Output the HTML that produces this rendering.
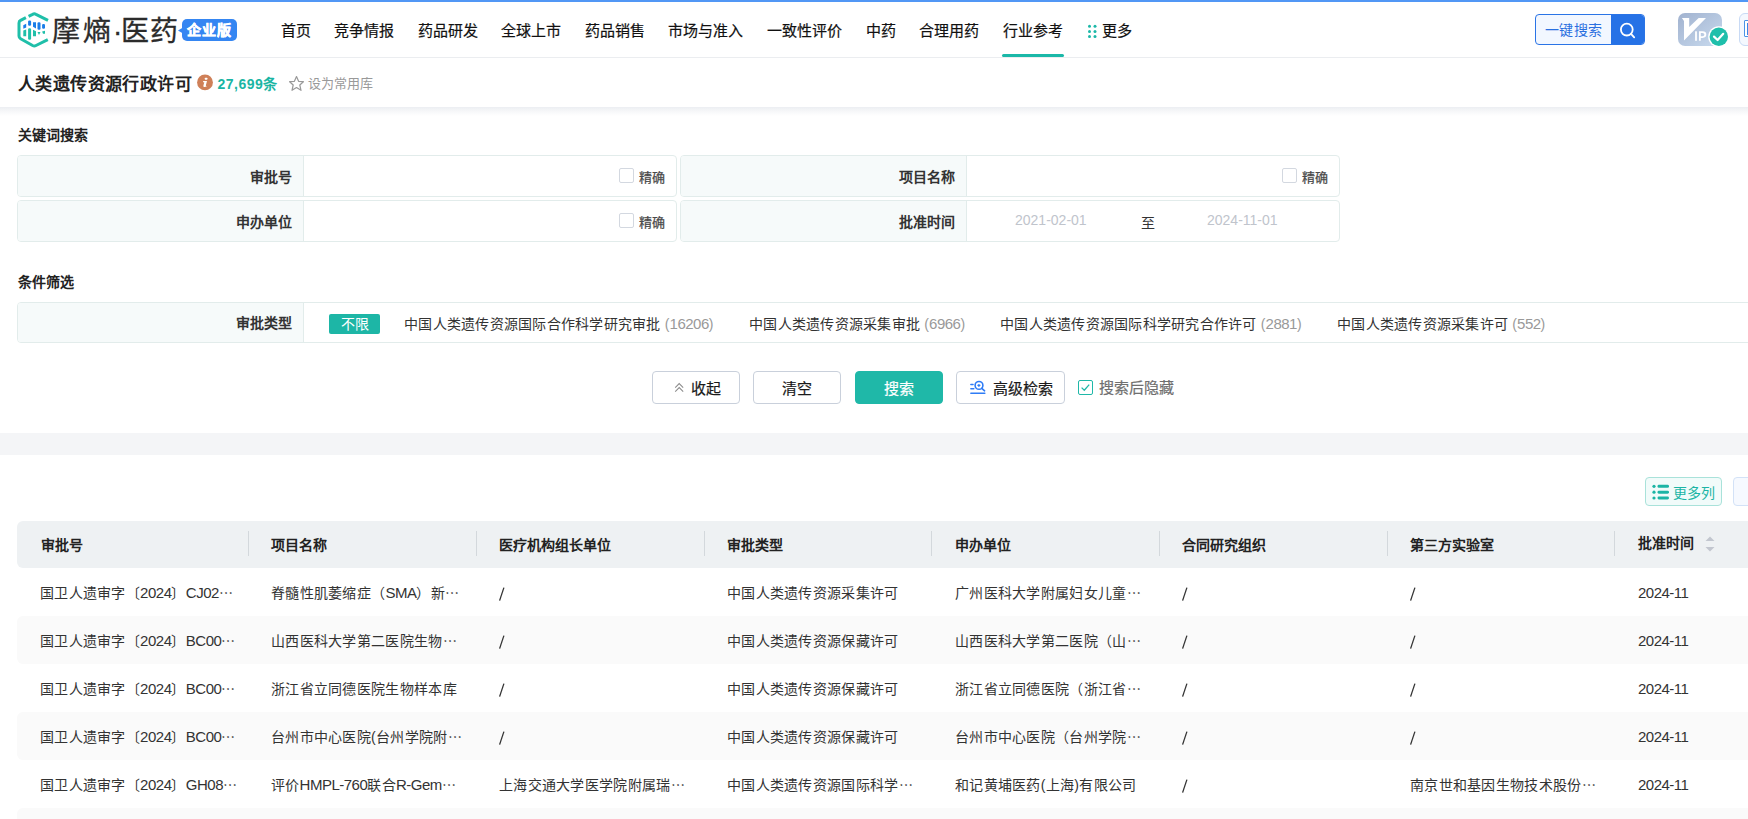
<!DOCTYPE html>
<html lang="zh-CN">
<head>
<meta charset="utf-8">
<style>
*{box-sizing:border-box;margin:0;padding:0}
html,body{width:1748px;height:819px;overflow:hidden;background:#fff}
body{position:relative;font-family:"Liberation Sans",sans-serif;color:#333;font-size:14px}
.a{position:absolute;white-space:nowrap}
.logo{top:14px;font-size:28px;line-height:36px;color:#2b2b2b;-webkit-text-stroke:0.3px #2b2b2b}
#topbar{left:0;top:0;width:1748px;height:2px;background:#5197f5}
#header{left:0;top:2px;width:1748px;height:56px;border-bottom:1px solid #ebedf0;background:#fff}
.nav{font-size:15px;line-height:20px;top:21px;color:#111;-webkit-text-stroke:0.2px #111}
#titlebar{left:0;top:58px;width:1748px;height:49px;background:#fff}
#shadow{left:0;top:107px;width:1748px;height:9px;background:linear-gradient(#eceef2,#f5f6f8 40%,rgba(255,255,255,0))}
.sec{font-size:14px;font-weight:bold;color:#222;line-height:20px}
.frow{height:42px;border:1px solid #e2eceb;border-radius:4px;background:#fff;overflow:hidden}
.flab{position:absolute;left:0;top:0;width:286px;height:40px;background:#f6fafa;border-right:1px solid #e2eceb;text-align:right;padding-right:11px;padding-top:1px;font-size:14px;font-weight:bold;line-height:40px;color:#333}
.chk{position:absolute;width:15px;height:15px;margin-top:-1px;border:1px solid #d3d8e0;border-radius:2px;background:#fff}
.jq{position:absolute;font-size:13px;color:#4a4a4a;line-height:20px;margin:1px 0 0 1px;-webkit-text-stroke:0.25px #4a4a4a}
.btn{position:absolute;top:371px;height:33px;border:1px solid #c9d0db;border-radius:4px;background:#fff;font-size:15px;line-height:31px;padding-top:1px;text-align:center;color:#1a1a1a;-webkit-text-stroke:0.2px currentColor}
.th{position:absolute;top:522px;height:47px;font-size:14px;font-weight:bold;line-height:47px;color:#222}
.sep{position:absolute;top:531px;width:1px;height:25px;background:#d3d8dc}
.rowbg{position:absolute;left:17px;width:1740px;height:48px;background:#fafafa;border-radius:6px}
.td{position:absolute;font-size:14px;line-height:20px;color:#333;letter-spacing:0.3px}
.ln{font-size:15px;letter-spacing:-0.5px}
.fi .ln{letter-spacing:-0.6px}
</style>
</head>
<body>
<div class="a" id="topbar"></div>
<div class="a" id="header"></div>

<!-- logo -->
<svg class="a" style="left:12px;top:8px" width="44" height="44" viewBox="0 0 44 44">
  <g fill="none" stroke="#1fbfa9" stroke-width="3" stroke-linecap="butt" stroke-linejoin="round">
    <path d="M36 12.3 L24 6.3 Q22.3 5.4 20.6 6.3 L16.6 8.3"/>
    <path d="M13.9 9.7 L8.6 12.4 Q7 13.2 7 15 L7 28 Q7 29.8 8.6 30.7 L20.6 37.5 Q22.3 38.4 24 37.5 L35.8 31.6"/>
  </g>
  <g fill="#1a7de8">
    <path d="M11.3 17.2 L14.2 15.8 L14.2 19.6 L11.3 20.8Z"/>
    <rect x="16.1" y="12.6" width="3" height="5.2" rx="1.2"/>
    <path d="M21 14.2 L24 14.2 L24 20.4 L21 18.8Z"/>
    <rect x="25.5" y="14.2" width="3" height="7.6" rx="1.2"/>
    <rect x="30.1" y="16.1" width="2.9" height="4.6" rx="1.2"/>
  </g>
  <g fill="#1fbfa9">
    <path d="M11.3 22.5 L14.2 21.4 L14.2 28.2 L11.3 28.2Z"/>
    <rect x="16.1" y="20.2" width="3" height="11.5" rx="1.2"/>
    <path d="M21 21.8 L24 23.2 L24 28.2 L21 28.2Z"/>
    <path d="M25.5 24 L28.5 24 L27 26.9Z"/>
    <path d="M30.1 23.6 L33 22.8 L33 25.8 L31 25.8Z"/>
  </g>
</svg>
<div class="a logo" style="left:52px">摩</div><div class="a logo" style="left:83px">熵</div><div class="a logo" style="left:113px">·</div><div class="a logo" style="left:121px">医</div><div class="a logo" style="left:150px">药</div>
<svg class="a" style="left:176px;top:18px" width="62" height="24" viewBox="0 0 62 24">
  <path d="M2 12.5 L7 9.5 L7 15.5Z" fill="#3586f2"/>
  <rect x="6" y="1" width="55" height="22" rx="5" fill="#3586f2"/>
</svg>
<div class="a" style="left:187px;top:20px;font-size:14px;font-weight:bold;line-height:20px;color:#fff;letter-spacing:1.2px;-webkit-text-stroke:0.5px #fff">企业版</div>

<!-- nav -->
<div class="a nav" style="left:281px">首页</div>
<div class="a nav" style="left:334px">竞争情报</div>
<div class="a nav" style="left:418px">药品研发</div>
<div class="a nav" style="left:501px">全球上市</div>
<div class="a nav" style="left:585px">药品销售</div>
<div class="a nav" style="left:668px">市场与准入</div>
<div class="a nav" style="left:767px">一致性评价</div>
<div class="a nav" style="left:866px">中药</div>
<div class="a nav" style="left:919px">合理用药</div>
<div class="a nav" style="left:1003px">行业参考</div>
<svg class="a" style="left:1087px;top:24px" width="11" height="15" viewBox="0 0 11 15">
  <g fill="#1bb8a8"><circle cx="2.5" cy="2.2" r="1.5"/><circle cx="8" cy="2.2" r="1.5"/><circle cx="2.5" cy="7.4" r="1.5"/><circle cx="8" cy="7.4" r="1.5"/><circle cx="2.5" cy="12.6" r="1.5"/><circle cx="8" cy="12.6" r="1.5"/></g>
</svg>
<div class="a nav" style="left:1102px">更多</div>
<div class="a" style="left:1002px;top:54px;width:62px;height:3px;border-radius:2px;background:#1bb8a8"></div>

<!-- header search -->
<div class="a" style="left:1535px;top:14px;width:110px;height:31px;border:1px solid #2a74e6;border-radius:4px;background:#f2f7ff;overflow:hidden">
  <div class="a" style="left:75px;top:0;width:34px;height:29px;background:#2672e6"></div>
</div>
<div class="a" style="left:1545px;top:20px;font-size:14px;line-height:20px;color:#2a6fe0;letter-spacing:0.3px">一键搜索</div>
<svg class="a" style="left:1617px;top:20px" width="20" height="20" viewBox="0 0 20 20">
  <circle cx="9.8" cy="9.6" r="5.9" fill="none" stroke="#fff" stroke-width="1.8"/>
  <path d="M14 13.8 L17.2 17.4" stroke="#fff" stroke-width="1.8" stroke-linecap="round"/>
</svg>

<!-- vip -->
<svg class="a" style="left:1676px;top:11px" width="56" height="40" viewBox="0 0 56 40">
  <defs><linearGradient id="vg" x1="0" y1="0" x2="1" y2="1"><stop offset="0" stop-color="#a1b2cf"/><stop offset="1" stop-color="#c9dbef"/></linearGradient></defs>
  <rect x="2" y="2" width="44" height="33" rx="7" fill="url(#vg)"/>
  <path d="M5.9 7.1 L13.2 7.1 L13.2 16 L22.7 7.1 L30 7.1 L8 29.4 L8 9.9Z" fill="#fff"/>
  <rect x="19.1" y="20.3" width="1.8" height="9.5" fill="#fff"/>
  <path d="M23 20.3 L26.5 20.3 Q30.3 20.3 30.3 23.6 Q30.3 26.9 26.5 26.9 L24.8 26.9 L24.8 29.8 L23 29.8Z M24.8 22 L24.8 25.2 L26.4 25.2 Q28.4 25.2 28.4 23.6 Q28.4 22 26.4 22Z" fill="#fff"/>
  <circle cx="42.8" cy="25.8" r="10.6" fill="#fff"/>
  <circle cx="42.8" cy="25.8" r="9.2" fill="#1fbfab"/>
  <path d="M38 25.6 L41.6 29 L47.2 22.8" fill="none" stroke="#fff" stroke-width="2.2" stroke-linecap="round" stroke-linejoin="round"/>
</svg>
<div class="a" style="left:1739px;top:13px;width:40px;height:33px;border:1px solid #c8daf5;border-radius:6px;background:#f4f8fe"></div>
<div class="a" style="left:1744px;top:20px;width:8px;height:17px;border:1.5px solid #4a93e6;border-radius:1px;background:#fff"></div><div class="a" style="left:1746.5px;top:22.5px;width:4px;height:12px;background:#3a86e6"></div>

<!-- title bar -->
<div class="a" id="titlebar"></div><div class="a" id="shadow"></div>
<div class="a" style="left:18px;top:74px;font-size:17px;letter-spacing:0.4px;font-weight:bold;line-height:22px;color:#222">人类遗传资源行政许可</div>
<svg class="a" style="left:196px;top:74px" width="18" height="18" viewBox="0 0 18 18">
  <circle cx="9" cy="8.4" r="7.9" fill="#cf8058"/>
  <rect x="8.9" y="3.8" width="2.4" height="2" rx="0.4" fill="#fff"/>
  <path d="M7.2 7.1 L11 7.1 L9.9 11.3 Q9.7 12 10.6 11.9 L10.5 12.6 Q9.2 13.1 8 12.9 Q7.1 12.6 7.4 11.5 L8.3 8.3 L7 8.3Z" fill="#fff"/>
</svg>
<div class="a" style="left:217.5px;top:74px;font-size:14px;font-weight:bold;line-height:20px;color:#1ab5a3;letter-spacing:0.5px">27,699条</div>
<svg class="a" style="left:288px;top:75px" width="17" height="17" viewBox="0 0 17 17">
  <path d="M8.5 1.5 L10.6 6.3 L15.4 6.7 L11.8 10 L13 15.3 L8.5 12.5 L4 15.3 L5.2 10 L1.6 6.7 L6.4 6.3Z" fill="none" stroke="#999" stroke-width="1.2" stroke-linejoin="round"/>
</svg>
<div class="a" style="left:308px;top:74px;font-size:13px;line-height:20px;color:#999">设为常用库</div>

<!-- keyword search -->
<div class="a sec" style="left:18px;top:125px">关键词搜索</div>

<div class="a frow" style="left:17px;top:155px;width:660px"><div class="flab">审批号</div></div>
<div class="chk" style="left:619px;top:169px"></div><div class="jq" style="left:638px;top:167px">精确</div>
<div class="a frow" style="left:680px;top:155px;width:660px"><div class="flab">项目名称</div></div>
<div class="chk" style="left:1282px;top:169px"></div><div class="jq" style="left:1301px;top:167px">精确</div>
<div class="a frow" style="left:17px;top:200px;width:660px"><div class="flab">申办单位</div></div>
<div class="chk" style="left:619px;top:214px"></div><div class="jq" style="left:638px;top:212px">精确</div>
<div class="a frow" style="left:680px;top:200px;width:660px"><div class="flab">批准时间</div></div>
<div class="a" style="left:1015px;top:210px;font-size:14px;line-height:20px;color:#c0c4cc">2021-02-01</div>
<div class="a" style="left:1141px;top:213px;font-size:14px;line-height:20px;color:#333">至</div>
<div class="a" style="left:1207px;top:210px;font-size:14px;line-height:20px;color:#c0c4cc">2024-11-01</div>

<!-- filters -->
<div class="a sec" style="left:18px;top:272px">条件筛选</div>
<div class="a frow" style="left:17px;top:302px;width:1760px;height:41px"><div class="flab" style="height:39px;line-height:39px">审批类型</div></div>
<div class="a" style="left:329px;top:314px;width:51px;height:20px;border-radius:2px;background:#1db6a6;color:#fff;font-size:14px;line-height:20px;text-align:center">不限</div>
<div class="a" style="left:404px;top:314px;font-size:14px;line-height:20px;color:#333;letter-spacing:0.25px">中国人类遗传资源国际合作科学研究审批 <span style="color:#999">(<span class="ln">16206</span>)</span></div>
<div class="a" style="left:749px;top:314px;font-size:14px;line-height:20px;color:#333;letter-spacing:0.25px">中国人类遗传资源采集审批 <span style="color:#999">(<span class="ln">6966</span>)</span></div>
<div class="a" style="left:1000px;top:314px;font-size:14px;line-height:20px;color:#333;letter-spacing:0.25px">中国人类遗传资源国际科学研究合作许可 <span style="color:#999">(<span class="ln">2881</span>)</span></div>
<div class="a" style="left:1337px;top:314px;font-size:14px;line-height:20px;color:#333;letter-spacing:0.25px">中国人类遗传资源采集许可 <span style="color:#999">(<span class="ln">552</span>)</span></div>

<!-- buttons -->
<div class="btn" style="left:652px;width:88px;padding-left:20px">收起</div>
<svg class="a" style="left:672px;top:381px" width="14" height="14" viewBox="0 0 14 14">
  <path d="M3.2 6.6 L7.2 2.6 L11.2 6.6 M3.2 10.6 L7.2 6.6 L11.2 10.6" fill="none" stroke="#8c8c8c" stroke-width="1.05"/>
</svg>
<div class="btn" style="left:753px;width:88px">清空</div>
<div class="btn" style="left:855px;width:88px;border-color:#1fb8a8;background:#1fb8a8;color:#fff">搜索</div>
<div class="btn" style="left:956px;width:109px;padding-left:24px">高级检索</div>
<svg class="a" style="left:966px;top:378px" width="22" height="20" viewBox="0 0 22 20">
  <g fill="none" stroke="#2f7cf6" stroke-width="1.6" stroke-linecap="round">
    <path d="M4.9 6.5 L7 6.5 M4.9 10.8 L7.8 10.8 M4.9 15.2 L18.8 15.2"/>
    <circle cx="13" cy="7.4" r="3.9"/>
    <path d="M15.8 10.3 L18.6 12.8"/>
  </g>
  <path d="M11.4 7.4 L14.4 7.4 M12.9 5.9 L12.9 8.9" stroke="#2f7cf6" stroke-width="1.1"/>
</svg>
<div class="a" style="left:1078px;top:380px;width:15px;height:15px;border:1px solid #1fb8a8;border-radius:2px"></div>
<svg class="a" style="left:1078px;top:380px" width="15" height="15" viewBox="0 0 15 15">
  <path d="M3.6 7.6 L6.3 10.2 L11.2 4.6" fill="none" stroke="#1fb8a8" stroke-width="1.3"/>
</svg>
<div class="a" style="left:1099px;top:378px;font-size:15px;line-height:20px;color:#6f6f6f;-webkit-text-stroke:0.2px #6f6f6f">搜索后隐藏</div>

<!-- gray band -->
<div class="a" style="left:0;top:433px;width:1748px;height:22px;background:#f4f5f7"></div>

<!-- more columns -->
<div class="a" style="left:1645px;top:477px;width:77px;height:29px;border:1px solid #a9e2da;border-radius:4px;background:#f1fbfa"></div>
<svg class="a" style="left:1651px;top:484px" width="20" height="17" viewBox="0 0 20 17">
  <g fill="#1bb5a5">
    <circle cx="3" cy="2.3" r="1.6"/><circle cx="3" cy="8.2" r="1.6"/><circle cx="3" cy="14" r="1.6"/>
    <rect x="6.5" y="0.8" width="11.5" height="3" rx="1.4"/><rect x="6.5" y="6.7" width="11.5" height="3" rx="1.4"/><rect x="6.5" y="12.5" width="11.5" height="3" rx="1.4"/>
  </g>
</svg>
<div class="a" style="left:1673px;top:483px;font-size:14px;line-height:20px;color:#1bb5a5">更多列</div>
<div class="a" style="left:1733px;top:477px;width:40px;height:29px;border:1px solid #d3e2f7;border-radius:4px;background:#f6f9ff"></div>

<!-- table header -->
<div class="a" style="left:17px;top:521px;width:1760px;height:47px;background:#eef1f3;border-radius:6px 0 0 6px"></div>
<div class="th" style="left:41px">审批号</div>
<div class="sep" style="left:248px"></div>
<div class="th" style="left:271px">项目名称</div>
<div class="sep" style="left:476px"></div>
<div class="th" style="left:499px">医疗机构组长单位</div>
<div class="sep" style="left:704px"></div>
<div class="th" style="left:727px">审批类型</div>
<div class="sep" style="left:931px"></div>
<div class="th" style="left:955px">申办单位</div>
<div class="sep" style="left:1159px"></div>
<div class="th" style="left:1182px">合同研究组织</div>
<div class="sep" style="left:1387px"></div>
<div class="th" style="left:1410px">第三方实验室</div>
<div class="sep" style="left:1614px"></div>
<div class="th" style="left:1638px;top:520px">批准时间</div>
<svg class="a" style="left:1703px;top:534px" width="14" height="20" viewBox="0 0 14 20">
  <path d="M2.5 7 L7 2.5 L11.5 7Z M2.5 13 L7 17.5 L11.5 13Z" fill="#c2c6cf"/>
</svg>

<!-- rows -->
<div class="rowbg" style="top:616px"></div>
<div class="rowbg" style="top:712px"></div>
<div class="rowbg" style="top:808px"></div>
<div class="td a" style="left:40px;top:583px">国卫人遗审字〔<span class="ln">2024</span>〕<span class="ln">CJ02</span>⋯</div>
<div class="td a" style="left:271px;top:583px">脊髓性肌萎缩症（<span class="ln">SMA</span>）新⋯</div>
<svg class="a" style="left:498px;top:586px" width="8" height="16" viewBox="0 0 8 16"><path d="M1.6 14.6 L5.9 1.6" stroke="#333" stroke-width="1.3"/></svg>
<div class="td a" style="left:727px;top:583px">中国人类遗传资源采集许可</div>
<div class="td a" style="left:955px;top:583px">广州医科大学附属妇女儿童⋯</div>
<svg class="a" style="left:1181px;top:586px" width="8" height="16" viewBox="0 0 8 16"><path d="M1.6 14.6 L5.9 1.6" stroke="#333" stroke-width="1.3"/></svg>
<svg class="a" style="left:1409px;top:586px" width="8" height="16" viewBox="0 0 8 16"><path d="M1.6 14.6 L5.9 1.6" stroke="#333" stroke-width="1.3"/></svg>
<div class="td a" style="left:1638px;top:583px"><span class="ln">2024-11</span></div>
<div class="td a" style="left:40px;top:631px">国卫人遗审字〔<span class="ln">2024</span>〕<span class="ln">BC00</span>⋯</div>
<div class="td a" style="left:271px;top:631px">山西医科大学第二医院生物⋯</div>
<svg class="a" style="left:498px;top:634px" width="8" height="16" viewBox="0 0 8 16"><path d="M1.6 14.6 L5.9 1.6" stroke="#333" stroke-width="1.3"/></svg>
<div class="td a" style="left:727px;top:631px">中国人类遗传资源保藏许可</div>
<div class="td a" style="left:955px;top:631px">山西医科大学第二医院（山⋯</div>
<svg class="a" style="left:1181px;top:634px" width="8" height="16" viewBox="0 0 8 16"><path d="M1.6 14.6 L5.9 1.6" stroke="#333" stroke-width="1.3"/></svg>
<svg class="a" style="left:1409px;top:634px" width="8" height="16" viewBox="0 0 8 16"><path d="M1.6 14.6 L5.9 1.6" stroke="#333" stroke-width="1.3"/></svg>
<div class="td a" style="left:1638px;top:631px"><span class="ln">2024-11</span></div>
<div class="td a" style="left:40px;top:679px">国卫人遗审字〔<span class="ln">2024</span>〕<span class="ln">BC00</span>⋯</div>
<div class="td a" style="left:271px;top:679px">浙江省立同德医院生物样本库</div>
<svg class="a" style="left:498px;top:682px" width="8" height="16" viewBox="0 0 8 16"><path d="M1.6 14.6 L5.9 1.6" stroke="#333" stroke-width="1.3"/></svg>
<div class="td a" style="left:727px;top:679px">中国人类遗传资源保藏许可</div>
<div class="td a" style="left:955px;top:679px">浙江省立同德医院（浙江省⋯</div>
<svg class="a" style="left:1181px;top:682px" width="8" height="16" viewBox="0 0 8 16"><path d="M1.6 14.6 L5.9 1.6" stroke="#333" stroke-width="1.3"/></svg>
<svg class="a" style="left:1409px;top:682px" width="8" height="16" viewBox="0 0 8 16"><path d="M1.6 14.6 L5.9 1.6" stroke="#333" stroke-width="1.3"/></svg>
<div class="td a" style="left:1638px;top:679px"><span class="ln">2024-11</span></div>
<div class="td a" style="left:40px;top:727px">国卫人遗审字〔<span class="ln">2024</span>〕<span class="ln">BC00</span>⋯</div>
<div class="td a" style="left:271px;top:727px">台州市中心医院(台州学院附⋯</div>
<svg class="a" style="left:498px;top:730px" width="8" height="16" viewBox="0 0 8 16"><path d="M1.6 14.6 L5.9 1.6" stroke="#333" stroke-width="1.3"/></svg>
<div class="td a" style="left:727px;top:727px">中国人类遗传资源保藏许可</div>
<div class="td a" style="left:955px;top:727px">台州市中心医院（台州学院⋯</div>
<svg class="a" style="left:1181px;top:730px" width="8" height="16" viewBox="0 0 8 16"><path d="M1.6 14.6 L5.9 1.6" stroke="#333" stroke-width="1.3"/></svg>
<svg class="a" style="left:1409px;top:730px" width="8" height="16" viewBox="0 0 8 16"><path d="M1.6 14.6 L5.9 1.6" stroke="#333" stroke-width="1.3"/></svg>
<div class="td a" style="left:1638px;top:727px"><span class="ln">2024-11</span></div>
<div class="td a" style="left:40px;top:775px">国卫人遗审字〔<span class="ln">2024</span>〕<span class="ln">GH08</span>⋯</div>
<div class="td a" style="left:271px;top:775px">评价<span class="ln">HMPL-760</span>联合<span class="ln">R-Gem</span>⋯</div>
<div class="td a" style="left:499px;top:775px">上海交通大学医学院附属瑞⋯</div>
<div class="td a" style="left:727px;top:775px">中国人类遗传资源国际科学⋯</div>
<div class="td a" style="left:955px;top:775px">和记黄埔医药(上海)有限公司</div>
<svg class="a" style="left:1181px;top:778px" width="8" height="16" viewBox="0 0 8 16"><path d="M1.6 14.6 L5.9 1.6" stroke="#333" stroke-width="1.3"/></svg>
<div class="td a" style="left:1410px;top:775px">南京世和基因生物技术股份⋯</div>
<div class="td a" style="left:1638px;top:775px"><span class="ln">2024-11</span></div>
</body>
</html>
